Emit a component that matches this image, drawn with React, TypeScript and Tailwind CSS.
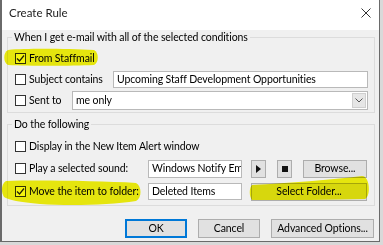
import { ReactNode } from 'react';

function Check({ checked }: { checked?: boolean }) {
  return (
    <span className="w-[11px] h-[11px] border border-[#333] bg-white flex items-center justify-center shrink-0">
      {checked && (
        <svg width="9" height="9" viewBox="0 0 9 9">
          <path d="M1 4.5 L3.5 7 L8 1.5" stroke="#222" strokeWidth="1.2" fill="none" />
        </svg>
      )}
    </span>
  );
}

function CheckLabel({ checked, label, width }: { checked?: boolean; label: string; width?: string }) {
  return (
    <div className={`flex items-center gap-[3px] shrink-0 ${width ?? ''}`}>
      <Check checked={checked} />
      <span className="whitespace-nowrap">{label}</span>
    </div>
  );
}

function Field({ value, className }: { value: string; className: string }) {
  return (
    <div className={`bg-white border border-[#b9b9b9] flex items-center px-[3px] overflow-hidden whitespace-nowrap ${className}`}>
      {value}
    </div>
  );
}

function Btn({ children, className }: { children: ReactNode; className: string }) {
  return (
    <div className={`bg-[#e1e1e1] border border-[#adadad] flex items-center justify-center whitespace-nowrap ${className}`}>
      {children}
    </div>
  );
}

export default function App() {
  return (
    <div className="w-[383px] h-[245px] bg-[#d9d9d9] overflow-hidden relative font-['Lato',sans-serif] text-[10.5px] tracking-[-0.1px] text-black leading-none">
      <div className="w-[380px] h-[242px] bg-[#f0f0f0] border-l-2 border-r border-b border-[#6a6a6a] flex flex-col">
        <div className="h-[30px] bg-white flex items-center justify-between pl-[7px] pr-[8px] pb-[4px] shrink-0">
          <span className="text-[11.5px] tracking-normal text-[#222]">Create Rule</span>
          <svg width="10" height="10" viewBox="0 0 10 10">
            <path d="M0.5 0.5 L9.5 9.5 M9.5 0.5 L0.5 9.5" stroke="#333" strokeWidth="1" />
          </svg>
        </div>

        <div className="pl-[5px] pr-[4px] flex flex-col">
          <fieldset className="border border-[#dcdcdc] pl-[7px] pr-[6px] pt-[3px] pb-px flex flex-col">
            <legend className="ml-[-3px] px-[2px] leading-[15px]">When I get e-mail with all of the selected conditions</legend>
            <div className="h-[21px] flex items-center">
              <CheckLabel checked label="From Staffmail" />
            </div>
            <div className="h-[21px] flex items-center">
              <CheckLabel label="Subject contains" width="w-[98px]" />
              <Field value="Upcoming Staff Development Opportunities" className="w-[255px] h-[17px]" />
            </div>
            <div className="h-[21px] flex items-center">
              <CheckLabel label="Sent to" width="w-[57px]" />
              <div className="w-[296px] h-[19px] bg-white border border-[#b9b9b9] flex items-center justify-between pl-[3px] pr-px">
                <span>me only</span>
                <div className="w-[14px] h-[15px] bg-[#e6e6e6] border border-[#cfcfcf] flex items-center justify-center">
                  <svg width="8" height="5" viewBox="0 0 8 5">
                    <path d="M0.5 0.5 L4 4 L7.5 0.5" stroke="#555" strokeWidth="1" fill="none" />
                  </svg>
                </div>
              </div>
            </div>
          </fieldset>

          <fieldset className="mt-[4px] border border-[#dcdcdc] pl-[7px] pr-[6px] pt-[3px] pb-[2px] flex flex-col">
            <legend className="ml-[-3px] px-[2px] leading-[15px]">Do the following</legend>
            <div className="h-[22px] flex items-center">
              <CheckLabel label="Display in the New Item Alert window" />
            </div>
            <div className="h-[23px] flex items-center">
              <CheckLabel label="Play a selected sound:" width="w-[133px]" />
              <Field value="Windows Notify Em" className="w-[94px] h-[18px]" />
              <Btn className="ml-[9px] w-[15px] h-[18px]">
                <svg width="5" height="8" viewBox="0 0 5 8">
                  <path d="M0 0 L5 4 L0 8 Z" fill="#111" />
                </svg>
              </Btn>
              <Btn className="ml-[11px] w-[15px] h-[18px]">
                <span className="w-[6px] h-[6px] bg-[#111]" />
              </Btn>
              <Btn className="ml-[11px] w-[64px] h-[18px]">Browse...</Btn>
            </div>
            <div className="h-[23px] flex items-center">
              <CheckLabel checked label="Move the item to folder:" width="w-[133px]" />
              <Field value="Deleted Items" className="w-[94px] h-[17px]" />
              <Btn className="ml-[9px] w-[116px] h-[18px]">Select Folder...</Btn>
            </div>
          </fieldset>

          <div className="mt-[13px] flex justify-end gap-[11px] pr-px">
            <Btn className="w-[62px] h-[19px] !border-[#0078d7] !border-2">OK</Btn>
            <Btn className="w-[62px] h-[19px]">Cancel</Btn>
            <Btn className="w-[103px] h-[19px]">Advanced Options...</Btn>
          </div>
        </div>
      </div>

      <svg className="absolute left-0 top-0 pointer-events-none mix-blend-multiply" width="383" height="245" viewBox="0 0 383 245">
        <path d="M8 50 C30 48 70 49 94 50 C99 52 99 63 94 65 C70 66 30 66 8 65 C3 63 3 52 8 50 Z" fill="#f4f40e" />
        <path d="M6 181 C40 180 100 181 136 183 C142 186 142 198 136 201 C110 205 70 206 40 204 C20 202 8 200 4 197 C1 192 1 184 6 181 Z" fill="#f4f40e" />
        <path d="M252 185 C290 183 330 180 362 176 C370 176 371 196 365 199 C330 200 290 200 252 200 C249 196 249 188 252 185 Z" fill="#f4f40e" />
      </svg>
    </div>
  );
}
